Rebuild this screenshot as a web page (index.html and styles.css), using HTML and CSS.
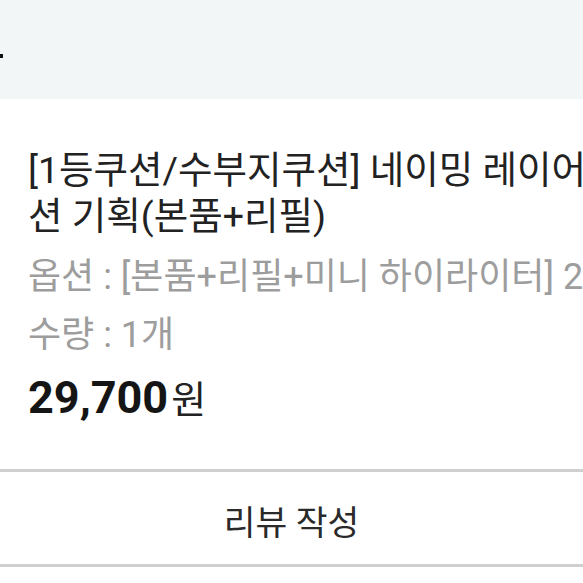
FILE: index.html
```html
<!DOCTYPE html>
<html lang="ko">
<head>
<meta charset="utf-8">
<link rel="stylesheet" href="styles.css">
</head>
<body>
<div class="page">
  <header class="top"><span class="dot" aria-hidden="true"></span></header>
  <section class="item">
    <div class="title">
      <div class="line">[1등쿠션/수부지쿠션] 네이밍 레이어드 핏 쿠</div>
      <div class="line">션 기획(본품+리필)</div>
    </div>
    <div class="meta">
      <div class="line">옵션 : [본품+리필+미니 하이라이터] 21호</div>
      <div class="line">수량 : 1개</div>
    </div>
    <div class="price"><span class="num">29,700</span><span class="won">원</span></div>
  </section>
  <div class="review"><button class="review-btn" type="button">리뷰 작성</button></div>
</div>
</body>
</html>
```
FILE: styles.css
```css
html, body {
  margin: 0;
  padding: 0;
  background: #ffffff;
  overflow: hidden;
}
.page {
  width: 583px;
  height: 583px;
  overflow: hidden;
  font-family: "Roboto", "Noto Sans CJK KR", sans-serif;
  color: #1e1e1e;
}
.top {
  height: 99px;
  background: #f3f6f7;
  display: flex;
  align-items: flex-start;
  padding-top: 54px;
  box-sizing: border-box;
}
.dot {
  display: block;
  width: 3px;
  height: 4px;
  background: #111;
}
.item {
  padding: 48px 0 0 28px;
}
.line {
  white-space: nowrap;
}
.title {
  font-size: 37.5px;
  line-height: 46px;
  color: #222;
}
.meta {
  margin-top: 9px;
  font-size: 36px;
  line-height: 58px;
  color: #9d9d9d;
}
.price {
  margin-top: 8px;
  font-size: 45px;
  line-height: 52px;
  color: #151515;
}
.num {
  font-weight: 700;
}
.won {
  font-size: 38px;
  line-height: 1;
  margin-left: 3px;
  color: #222;
}
.review {
  margin-top: 45px;
  border-top: 3px solid #cfcfcf;
  border-bottom: 3px solid #cfcfcf;
  height: 92px;
  display: flex;
}
.review-btn {
  flex: 1;
  border: 0;
  background: #fff;
  font-family: "Roboto", "Noto Sans CJK KR", sans-serif;
  font-size: 34.5px;
  color: #2a2a2a;
  padding: 3px 0 0 0;
}
```
